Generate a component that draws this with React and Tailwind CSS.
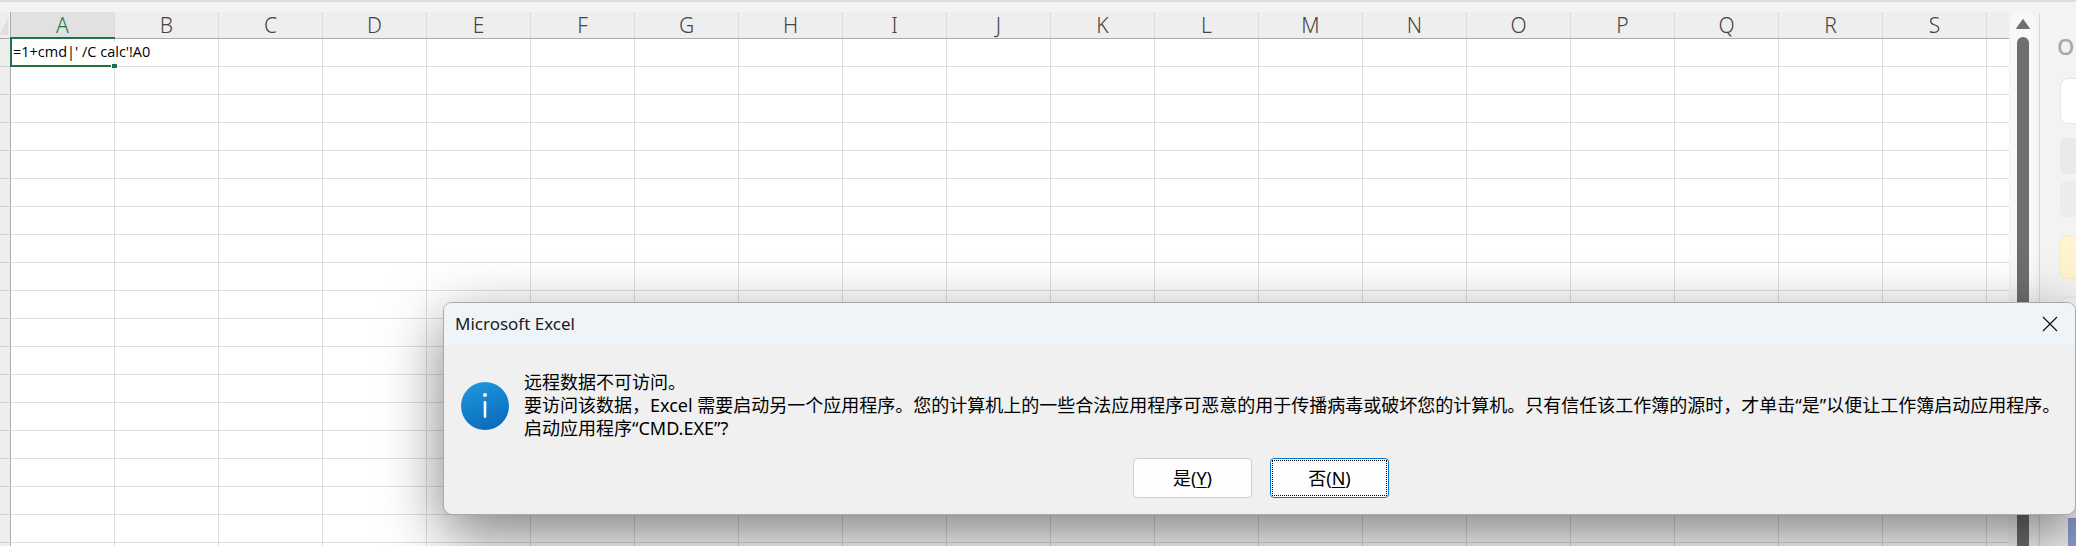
import React from "react";

const columns = "ABCDEFGHIJKLMNOPQRST".split("");
const rows = Array.from({ length: 19 }, (_, i) => i);
const uiFont = "font-['Noto_Sans','Noto_Sans_CJK_SC',sans-serif]";

const Sheet = () => (
  <div className="w-[2009px] shrink-0 overflow-hidden">
    <div className="flex h-[26px] bg-[#eeeeee] border-b border-[#ababab] box-content">
      <div className="w-[11px] shrink-0 border-r border-[#ababab] bg-[#eeeeee]">
        <svg width="10" height="26" viewBox="0 0 10 26">
          <path d="M0 23 L8 5 L8 23 Z" fill="#dfdfdf" />
        </svg>
      </div>
      {columns.map((col, i) => (
        <div
          key={col}
          className={`w-[104px] shrink-0 flex items-center justify-center border-r border-[#dcdcdc] text-[21px] leading-[26px] font-light ${uiFont} ${
            i === 0 ? "bg-[#e1e1e1] text-[#217346]" : "text-[#444444]"
          }`}
        >
          {col === "T" ? "" : col}
        </div>
      ))}
    </div>
    {rows.map((row) => (
      <div key={row} className="flex h-[28px] bg-white">
        <div className="w-[11px] shrink-0 bg-[#eeeeee] border-r border-b border-r-[#ababab] border-b-[#d2d2d2]" />
        {columns.map((col, i) => (
          <div
            key={col}
            className={`relative w-[104px] shrink-0 border-r border-b border-[#dedede] ${row === 0 && i === 0 ? "z-10" : ""}`}
          >
            {row === 0 && i === 0 && (
              <>
                <div className="absolute left-[-1px] top-[-2px] w-[105px] h-[30px] border-2 border-r-0 border-[#217346]" />
                <div className="absolute left-[100px] top-[25px] w-[6px] h-[4px] bg-[#217346] border-l border-white" />
                <div className="absolute left-[2px] top-[3px] whitespace-nowrap text-[14.5px] leading-[20px] text-black bg-white font-['Open_Sans',sans-serif]">
                  =1+cmd|' /C calc'!A0
                </div>
              </>
            )}
          </div>
        ))}
      </div>
    ))}
  </div>
);

const ScrollBar = () => (
  <div className="w-[26px] ml-[1px] mt-[11px] shrink-0 rounded-t-[13px] bg-[#f8f8f8] flex flex-col items-center">
    <svg className="mt-[8px]" width="14" height="10" viewBox="0 0 14 10">
      <path d="M7 0.5 L13.5 9.5 L0.5 9.5 Z" fill="#6f6f6f" stroke="#6f6f6f" strokeLinejoin="round" />
    </svg>
    <div className="mt-[8px] w-[12px] flex-1 rounded-t-[6px] bg-[#6e6e6e]" />
  </div>
);

const SidePanel = () => (
  <div className="flex-1 mt-[13px] ml-[3px] border-l border-[#d8d8d8] pl-[20px] flex flex-col overflow-hidden">
    <div className="h-[65px] pt-[18px] -ml-[3px] whitespace-nowrap text-[#a8a8a8] text-[22px] leading-[30px] font-semibold font-['Open_Sans',sans-serif]">
      O
    </div>
    <div className="h-[46px] w-[40px] rounded-l-[8px] bg-white border border-[#e6e6e6]" />
    <div className="mt-[14px] h-[36px] w-[40px] rounded-l-[6px] bg-[#eaeaea]" />
    <div className="mt-[7px] h-[36px] w-[40px] rounded-l-[6px] bg-[#ececec]" />
    <div className="mt-[18px] h-[44px] w-[40px] rounded-l-[6px] bg-[#fff3d2] border border-[#fbe9bf]" />
    <div className="mt-[18px] h-[222px] w-[40px] rounded-l-[8px] bg-[#f6f6f6] border border-[#e3e3e3] relative">
      <div className="absolute left-[7px] top-[220px] w-[30px] h-[30px] bg-[#8f9fd8]" />
    </div>
  </div>
);

const InfoIcon = () => (
  <svg className="shrink-0 mt-[1px]" width="48" height="48" viewBox="0 0 48 48">
    <defs>
      <linearGradient id="infoFill" x1="0.2" y1="0" x2="0.6" y2="1">
        <stop offset="0" stopColor="#1f97dd" />
        <stop offset="1" stopColor="#0a6cbd" />
      </linearGradient>
    </defs>
    <circle cx="24" cy="24" r="24" fill="url(#infoFill)" />
    <circle cx="24" cy="13" r="2" fill="#ffffff" />
    <rect x="22.7" y="19" width="2.6" height="17" rx="1.3" fill="#ffffff" />
  </svg>
);

const DialogButton = ({ label, hotkey, focused }) => (
  <button
    className={`relative w-[119px] h-[40px] rounded-[4px] bg-[#fdfdfd] text-[18px] text-black border flex items-center justify-center ${uiFont} ${
      focused ? "border-[#0078d4]" : "border-[#cfcfcf]"
    }`}
  >
    {focused && <span className="absolute inset-[1px] border border-dotted border-black" />}
    {label}(<span className="underline underline-offset-2">{hotkey}</span>)
  </button>
);

const Dialog = () => (
  <div
    className={`absolute left-[443px] top-[302px] w-[1633px] h-[213px] rounded-[9px] border border-[#a9a9a9] bg-[#f0f0f0] overflow-hidden flex flex-col shadow-[0_20px_60px_rgba(0,0,0,0.5)] ${uiFont}`}
  >
    <div className="h-[42px] shrink-0 bg-[#eff4f9] pl-[11px] pr-[17px] flex items-center justify-between">
      <span className="text-[17px] text-[#1a1a1a]">Microsoft Excel</span>
      <svg width="16" height="16" viewBox="0 0 16 16" fill="none" stroke="#111111" strokeWidth="1.2">
        <path d="M1 1 L15 15 M15 1 L1 15" />
      </svg>
    </div>
    <div className="flex items-center gap-[15px] pl-[17px] pt-[26px]">
      <InfoIcon />
      <div className="text-[18px] leading-[23px] text-black whitespace-nowrap">
        <p>远程数据不可访问。</p>
        <p>要访问该数据，Excel 需要启动另一个应用程序。您的计算机上的一些合法应用程序可恶意的用于传播病毒或破坏您的计算机。只有信任该工作簿的源时，才单击“是”以便让工作簿启动应用程序。</p>
        <p>启动应用程序“CMD.EXE”?</p>
      </div>
    </div>
    <div className="flex justify-center gap-[18px] mt-[18px] pl-[3px]">
      <DialogButton label="是" hotkey="Y" />
      <DialogButton label="否" hotkey="N" focused />
    </div>
  </div>
);

export default function App() {
  return (
    <div className="relative w-[2076px] h-[546px] overflow-hidden bg-[#f3f3f3]">
      <div className="h-full flex flex-col">
        <div className="h-[12px] shrink-0 border-t-2 border-[#dcdcdc]" />
        <div className="flex-1 flex min-h-0 -mt-[12px]">
          <div className="pt-[12px] h-full overflow-hidden shrink-0">
            <Sheet />
          </div>
          <ScrollBar />
          <SidePanel />
        </div>
      </div>
      <Dialog />
    </div>
  );
}
